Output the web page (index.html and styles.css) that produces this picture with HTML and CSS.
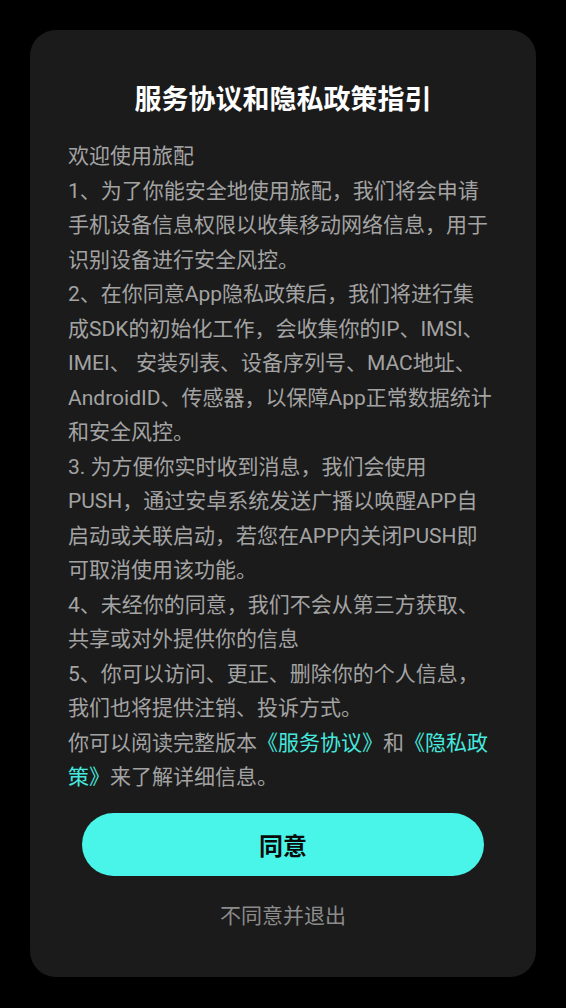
FILE: index.html
```html
<!DOCTYPE html>
<html lang="zh-CN">
<head>
<meta charset="utf-8">
<title>服务协议和隐私政策指引</title>
<link rel="stylesheet" href="styles.css">
</head>
<body>
<div class="card">
  <h1 class="title">服务协议和隐私政策指引</h1>
  <div class="content">
    <p>欢迎使用旅配</p>
    <p>1、为了你能安全地使用旅配，我们将会申请<br>手机设备信息权限以收集移动网络信息，用于<br>识别设备进行安全风控。</p>
    <p>2、在你同意App隐私政策后，我们将进行集<br>成SDK的初始化工作，会收集你的IP、IMSI、<br>IMEI、 安装列表、设备序列号、MAC地址、<br>AndroidID、传感器，以保障App正常数据统计<br>和安全风控。</p>
    <p>3. 为方便你实时收到消息，我们会使用<br>PUSH，通过安卓系统发送广播以唤醒APP自<br>启动或关联启动，若您在APP内关闭PUSH即<br>可取消使用该功能。</p>
    <p>4、未经你的同意，我们不会从第三方获取、<br>共享或对外提供你的信息</p>
    <p>5、你可以访问、更正、删除你的个人信息，<br>我们也将提供注销、投诉方式。</p>
    <p>你可以阅读完整版本<a class="link" href="#">《服务协议》</a>和<a class="link" href="#">《隐私政<br>策》</a>来了解详细信息。</p>
  </div>
  <button class="agree" type="button">同意</button>
  <div class="exit">不同意并退出</div>
</div>
</body>
</html>
```

FILE: styles.css
```css
html, body {
  margin: 0;
  padding: 0;
  background: #000;
}
body {
  padding: 30px 30px 31px;
  font-family: Roboto, "Noto Sans CJK SC", sans-serif;
}
.card {
  background: #1b1b1b;
  border-radius: 26px;
  padding: 51px 38px 46px;
  display: flex;
  flex-direction: column;
  align-items: stretch;
}
.title {
  margin: 0;
  text-align: center;
  color: #fff;
  font-size: 27px;
  line-height: 38px;
  font-weight: 700;
}
.content {
  margin-top: 20px;
  color: #a3a3a3;
  font-size: 21px;
  line-height: 34.5px;
  white-space: nowrap;
}
.content p {
  margin: 0;
}
.link {
  color: #45e9df;
  text-decoration: none;
}
.agree {
  margin: 18px 14px 0;
  height: 63px;
  border: none;
  border-radius: 32px;
  background: #48f5e8;
  color: #0a0a0a;
  font-family: inherit;
  font-size: 24px;
  font-weight: 700;
}
.exit {
  margin-top: 25px;
  text-align: center;
  color: #8c8c8c;
  font-size: 21px;
  line-height: 30px;
}
```
